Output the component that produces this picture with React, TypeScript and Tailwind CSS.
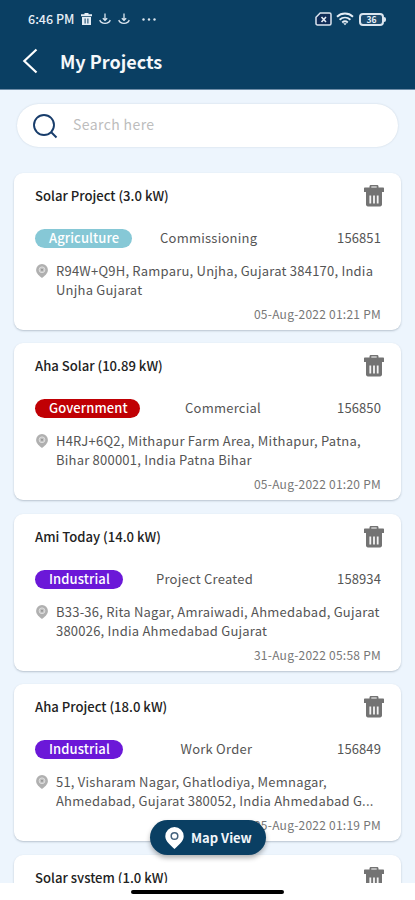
import { useState } from "react";
import clsx from "clsx";

type Project = {
  name: string;
  details?: {
    id: string;
    category: string;
    chip: string;
    status: string;
    statusOffset: string;
    address: string[];
    date: string;
  };
};

const PROJECTS: Project[] = [
  {
    name: "Solar Project (3.0 kW)",
    details: {
      id: "156851",
      category: "Agriculture",
      chip: "bg-[#86c8d6] w-[97px]",
      status: "Commissioning",
      statusOffset: "ml-[28px]",
      address: ["R94W+Q9H, Ramparu, Unjha, Gujarat 384170, India", "Unjha Gujarat"],
      date: "05-Aug-2022 01:21 PM",
    },
  },
  {
    name: "Aha Solar (10.89 kW)",
    details: {
      id: "156850",
      category: "Government",
      chip: "bg-[#c00004] w-[105px]",
      status: "Commercial",
      statusOffset: "ml-[45px]",
      address: ["H4RJ+6Q2, Mithapur Farm Area, Mithapur, Patna,", "Bihar 800001, India Patna Bihar"],
      date: "05-Aug-2022 01:20 PM",
    },
  },
  {
    name: "Ami Today (14.0 kW)",
    details: {
      id: "158934",
      category: "Industrial",
      chip: "bg-[#6b18d8] w-[88px]",
      status: "Project Created",
      statusOffset: "ml-[33px]",
      address: ["B33-36, Rita Nagar, Amraiwadi, Ahmedabad, Gujarat", "380026, India Ahmedabad Gujarat"],
      date: "31-Aug-2022 05:58 PM",
    },
  },
  {
    name: "Aha Project (18.0 kW)",
    details: {
      id: "156849",
      category: "Industrial",
      chip: "bg-[#6b18d8] w-[88px]",
      status: "Work Order",
      statusOffset: "ml-[57.5px]",
      address: ["51, Visharam Nagar, Ghatlodiya, Memnagar,", "Ahmedabad, Gujarat 380052, India Ahmedabad G..."],
      date: "05-Aug-2022 01:19 PM",
    },
  },
  { name: "Solar system (1.0 kW)" },
];

function IconTrash() {
  return (
    <svg width="20" height="22" viewBox="0 0 20 22" aria-hidden="true">
      <path
        d="M5.500 2.600V1.400C5.500.6 6.100 0 6.900 0h6.200c.8 0 1.400.6 1.400 1.400v1.200H19c.6 0 1 .4 1 1V7h-2v12.600c0 1-.8 1.900-1.900 1.900H3.900C2.800 21.500 2 20.600 2 19.600V7H0V3.600c0-.6.4-1 1-1zM7.300 1.500v1.100h5.400V1.500z"
        fill="#737373"
        fillRule="evenodd"
      />
      <path d="M6.300 10.500v8M10 10.500v8M13.700 10.500v8" stroke="#f4f4f4" strokeWidth="1.800" />
    </svg>
  );
}

function IconPin() {
  return (
    <svg width="12" height="14" viewBox="0 0 12 14" aria-hidden="true">
      <path d="M6 0a5.900 5.900 0 0 0-5.900 5.900C.1 9.500 3.600 12 6 14c2.400-2 5.900-4.500 5.900-8.100A5.900 5.900 0 0 0 6 0z" fill="#b0b0b0" />
      <circle cx="6" cy="5.800" r="2.900" fill="#c4c4c4" stroke="#dedede" strokeWidth="1" />
      <circle cx="6" cy="5.800" r="1.100" fill="#959595" />
    </svg>
  );
}

function IconAnchor() {
  return (
    <svg width="12" height="12" viewBox="0 0 12 12" fill="none" stroke="#dbe5ef" strokeWidth="1.300" aria-hidden="true">
      <path d="M6 .5v7.500M3.800 5.200 6 7.300l2.200-2.100" />
      <path d="M.8 7C1.400 9.300 3.400 10.300 6 10.300S10.600 9.300 11.200 7" />
    </svg>
  );
}

function StatusBar() {
  return (
    <div className="flex h-[38px] items-center pr-[29px] pl-[28px] text-[#e6eef6]">
      <span className="w-[49px] text-[12.5px] leading-none font-medium whitespace-nowrap">6:46 PM</span>
      <svg className="ml-[4px]" width="11" height="12" viewBox="0 0 11 12" aria-hidden="true">
        <path d="M3.500 0h4v1.300H11v2H0v-2h3.500zM1 4h9v8H1z" fill="#e6eef6" />
        <path d="M4.100 5.500v5M6.900 5.500v5" stroke="#0a3f63" strokeWidth="1" />
      </svg>
      <span className="ml-[7px]"><IconAnchor /></span>
      <span className="ml-[7px]"><IconAnchor /></span>
      <svg className="ml-[12px]" width="14" height="3" viewBox="0 0 14 3" fill="#dbe5ef" aria-hidden="true">
        <circle cx="1.500" cy="1.500" r="1.200" />
        <circle cx="7" cy="1.500" r="1.200" />
        <circle cx="12.500" cy="1.500" r="1.200" />
      </svg>

      {/* SIM, wifi, battery */}
      <svg className="ml-auto" width="17" height="14" viewBox="0 0 17 14" aria-hidden="true">
        <path d="M5.200 1h9.300c.9 0 1.500.6 1.500 1.500v9c0 .9-.6 1.500-1.500 1.500h-12C1.600 13 1 12.400 1 11.500V5.200z" fill="#102c57" stroke="#dbe5ef" strokeWidth="1.500" />
        <path d="m6.500 5 4.500 5M11 5l-4.500 5" stroke="#e6eef6" strokeWidth="1.600" />
      </svg>
      <svg className="ml-[4px]" width="18" height="14" viewBox="0 0 18 14" fill="none" stroke="#e6eef6" strokeWidth="1.900" aria-hidden="true">
        <path d="M1 4.700c4.600-4.200 11.400-4.200 16 0M3.600 7.700c3.200-2.800 7.600-2.800 10.800 0M6.200 10.400c1.700-1.400 3.900-1.400 5.600 0" />
        <path d="m7.200 11.300 1.800 2 1.800-2z" fill="#e6eef6" stroke="none" />
      </svg>
      <div className="ml-[5px] flex h-[13px] w-[25px] items-center justify-center rounded-[4px] border-2 border-[#dbe5ef] bg-[#1d4b6e] text-[8.5px] leading-none font-bold">
        36
      </div>
      <div className="h-[5px] w-[2px] rounded-r-sm bg-[#dbe5ef]" />
    </div>
  );
}

function ProjectCard({ project }: { project: Project }) {
  const { name, details } = project;

  return (
    <article className="h-[157px] shrink-0 rounded-[9px] bg-white pt-[11px] pr-[20px] pl-[21px] shadow-[0_1px_2px_rgba(60,80,100,0.3)]">
      <div className="flex h-6 items-center justify-between">
        <h2 className="text-[13.1px] leading-6 font-medium text-[#222]">{name}</h2>
        <button className="-mr-[3px]" aria-label={`Delete ${name}`}>
          <IconTrash />
        </button>
      </div>

      {details && (
        <>
          <div className="mt-[21px] flex h-[19px] items-center text-[13px] leading-[17px] tracking-[0.24px] text-[#555]">
            <span
              className={clsx(
                "h-[19px] shrink-0 rounded-full pl-[14px] font-medium tracking-[0.1px] text-white",
                details.chip,
              )}
            >
              {details.category}
            </span>
            <span className={clsx("h-[19px] whitespace-nowrap", details.statusOffset)}>{details.status}</span>
            <span className="ml-auto h-[19px] tracking-[0.1px]">{details.id}</span>
          </div>

          <div className="mt-[13px] flex h-[38px]">
            <span className="mt-[3px] ml-[1px] w-[20px] shrink-0"><IconPin /></span>
            <p className="text-[13px] leading-[19px] tracking-[0.22px] whitespace-nowrap text-[#555]">
              {details.address.map((line) => (
                <span key={line} className="block">{line}</span>
              ))}
            </p>
          </div>

          <div className="mt-[6px] text-right text-[12px] leading-[18px] tracking-[0.24px] text-[#777]">
            {details.date}
          </div>
        </>
      )}
    </article>
  );
}

export default function App() {
  const [query, setQuery] = useState("");

  return (
    <div className="relative flex h-[900px] w-[415px] flex-col overflow-hidden bg-white font-['Noto_Sans_CJK_SC','Noto_Sans',sans-serif]">
      <header className="h-[90px] shrink-0 border-b border-[#6f8da8] bg-[#0a3f63]">
        <StatusBar />
        <div className="flex h-[45px] items-center pl-[22px]">
          <button aria-label="Back">
            <svg width="16" height="26" viewBox="0 0 16 26" fill="none" stroke="#fff" strokeWidth="2.200" aria-hidden="true">
              <path d="M14.500 1.500 2.300 13l12.200 11.500" />
            </svg>
          </button>
          <h1 className="ml-[22px] text-[18px] leading-none font-bold text-[#f5f8fb]">My Projects</h1>
        </div>
      </header>

      <main className="h-[793px] shrink-0 overflow-hidden bg-[#edf5fd] px-[14px] pt-[14px]">
        <label className="mx-[3px] flex h-[43px] items-center rounded-full bg-white pl-[15px] shadow-[0_0_2px_rgba(60,80,100,0.2)]">
          <svg width="26" height="26" viewBox="0 0 26 26" fill="none" stroke="#183d6b" strokeWidth="1.900" aria-hidden="true">
            <circle cx="12" cy="12" r="10" />
            <path d="m19 19 5.500 5.500" />
          </svg>
          <input
            value={query}
            onChange={(e) => setQuery(e.target.value)}
            placeholder="Search here"
            className="-mt-[2px] ml-[15px] w-60 text-[14px] tracking-[0.4px] text-[#444] outline-none placeholder:text-[#bdbdbd]"
          />
        </label>

        <div className="mt-[26px] flex flex-col gap-[13.400px]">
          {PROJECTS.map((project) => (
            <ProjectCard key={project.name} project={project} />
          ))}
        </div>
      </main>

      {/* Home indicator */}
      <div className="mx-auto mt-[7px] h-[4px] w-[153px] rounded-full bg-black" />

      <button className="absolute top-[820px] left-[150px] flex h-[35px] w-[116px] items-center rounded-full bg-[#0a3f63] pl-[15px] shadow-[0_3px_5px_rgba(0,0,0,0.3)]">
        <svg width="19" height="22" viewBox="0 0 19 22" aria-hidden="true">
          <path d="M9.500 0A9.200 9.200 0 0 0 .3 9.200C.3 14.500 6 18.500 9.500 22c3.500-3.500 9.200-7.500 9.200-12.800A9.200 9.200 0 0 0 9.500 0z" fill="#fff" />
          <circle cx="9.500" cy="9" r="3.300" fill="none" stroke="#44627d" strokeWidth="1.500" />
        </svg>
        <span className="ml-[7px] text-[13px] leading-none font-bold whitespace-nowrap text-[#f2f6fa]">Map View</span>
      </button>
    </div>
  );
}
